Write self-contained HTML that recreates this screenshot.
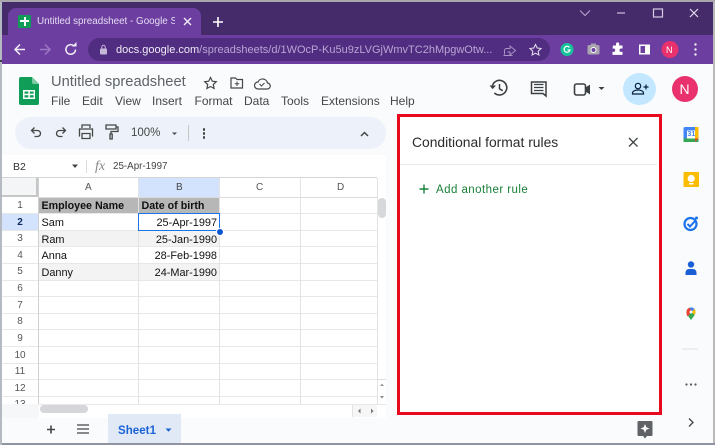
<!DOCTYPE html>
<html><head><meta charset="utf-8">
<style>
html,body{margin:0;padding:0;}
body{width:715px;height:445px;position:relative;overflow:hidden;background:#f9fbfd;font-family:"Liberation Sans",sans-serif;}
.a{position:absolute;}
.t{position:absolute;white-space:nowrap;}
svg{position:absolute;overflow:visible;}
.menu{position:absolute;top:94px;font-size:12px;color:#444746;line-height:14px;}
.rh{position:absolute;left:2px;width:36px;text-align:center;font-size:10px;color:#555;line-height:16px;}
.c{position:absolute;font-size:10.9px;color:#111;line-height:16px;white-space:nowrap;}
.hl{position:absolute;left:2px;width:375px;height:1px;background:#e8e8e8;}
.vl{position:absolute;width:1px;background:#e3e3e3;top:178px;height:226px;}
</style></head><body>
<!-- window chrome -->
<div class="a" style="left:0;top:0;width:715px;height:2px;background:#a9a7ab"></div>
<div class="a" style="left:2px;top:2px;width:711px;height:33px;background:#452b69"></div>
<div class="a" style="left:2px;top:35px;width:711px;height:29px;background:#6c3ea0"></div>
<div class="a" style="left:8px;top:8px;width:193px;height:28px;background:#6c3ea0;border-radius:8px 8px 0 0"></div>
<div class="a" style="left:18px;top:15px;width:13px;height:13px;background:#0f9d58;border-radius:1px"></div>
<div class="a" style="left:20px;top:20px;width:9px;height:2px;background:#fff"></div>
<div class="a" style="left:23.5px;top:17px;width:2px;height:9px;background:#fff"></div>
<div class="t" style="left:37px;top:15px;font-size:9.850px;line-height:14px;color:#e5dcf2;width:138px;overflow:hidden;">Untitled spreadsheet - Google Sheets</div>
<svg style="left:0;top:0" width="715" height="64" fill="none">
<path d="M184 18l7 7M191 18l-7 7" stroke="#f1ecf7" stroke-width="1.4"/>
<path d="M213 22h10M218 17v10" stroke="#fff" stroke-width="1.6"/>
<path d="M580 10.5l5 5 5-5" stroke="#b9a8cf" stroke-width="1"/>
<path d="M617 13h8" stroke="#cfc3df" stroke-width="1.2"/>
<rect x="653.5" y="9" width="9" height="8" stroke="#d5cbe3" stroke-width="1.2"/>
<path d="M690 9l8 8M698 9l-8 8" stroke="#e4ddee" stroke-width="1.2"/>
<path d="M25 49.5H15M20 44.5l-5 5 5 5" stroke="#f2eef8" stroke-width="1.5"/>
<path d="M40 49.5h10M45 44.5l5 5-5 5" stroke="#9a78c4" stroke-width="1.5"/>
<path d="M75.5 49.5a4.8 4.8 0 1 1-1.6-3.6" stroke="#f2eef8" stroke-width="1.5"/>
<path d="M72 46.5h4.500v-4.500z" fill="#f2eef8"/>
</svg>
<!-- address bar -->
<div class="a" style="left:88px;top:38px;width:462px;height:23px;background:#502d80;border-radius:12px"></div>
<svg style="left:99px;top:44px" width="10" height="11"><rect x="1" y="4.500" width="7" height="6" rx="1" fill="#c4b7d7"/><path d="M2.800 5V3a1.700 1.700 0 0 1 3.400 0v2" stroke="#c4b7d7" fill="none"/></svg>
<div class="t" style="left:116px;top:42px;font-size:11px;line-height:16px;color:#b9a5d5"><span style="color:#f0ebf6">docs.google.com</span>/spreadsheets/d/1WOcP-Ku5u9zLVGjWmvTC2hMpgwOtw...</div>
<svg style="left:0;top:0" width="715" height="64" fill="none">
<path d="M504.500 54.500v-4a2 2 0 0 1 2-2h3.500v-2.500l5.500 4.500-5.500 4.500v-3h-2.500M503.500 55.500h9" stroke="#a892c6" stroke-width="1"/>
<path d="M535.500 44.500l1.700 3.500 3.800.5-2.800 2.700.7 3.800-3.400-1.800-3.400 1.800.7-3.800-2.800-2.700 3.800-.5z" stroke="#e0d8ec" stroke-width="1.100"/>
<circle cx="567" cy="49.500" r="6.500" fill="#15c39a"/>
<path d="M569.500 47.500a3 3 0 1 0 .5 2.500h-2.500" stroke="#fff" stroke-width="1.200"/>
<rect x="587.500" y="45" width="12" height="9.500" rx="1.500" fill="#a9a4ad"/><rect x="591" y="43.500" width="5" height="2" fill="#a9a4ad"/><circle cx="593.500" cy="50" r="2.500" fill="#6c3ea0" stroke="#fff"/>
<path d="M613 46h3v-1.500a1.600 1.600 0 0 1 3.200 0V46h3.300v3h-1.300a1.700 1.700 0 0 0 0 3.400h1.300v3h-10v-3h1a1.700 1.700 0 0 0 0-3.400h-1z" fill="#fff" transform="translate(0 -.5)"/>
<rect x="639" y="44.500" width="11" height="10" fill="#fff"/><rect x="640.500" y="46" width="4.500" height="7" fill="#6c3ea0"/>
<circle cx="670" cy="49.500" r="8.500" fill="#e8316d"/>
<circle cx="695.500" cy="44.500" r="1.200" fill="#eee"/><circle cx="695.500" cy="49.500" r="1.200" fill="#eee"/><circle cx="695.500" cy="54.500" r="1.200" fill="#eee"/>
</svg>
<div class="t" style="left:666px;top:44px;font-size:9px;line-height:12px;color:#fff">N</div>
<!-- Sheets logo -->
<svg style="left:19px;top:77px" width="21" height="28"><path d="M2 0h11l7 7v19a2 2 0 0 1-2 2H2a2 2 0 0 1-2-2V2a2 2 0 0 1 2-2z" fill="#0f9d58"/><path d="M13 0v5.500a1.500 1.500 0 0 0 1.500 1.500H20z" fill="#7bcba3"/><rect x="4" y="13" width="12" height="9" fill="#fff"/><rect x="5.500" y="14.500" width="3.800" height="2.200" fill="#0f9d58"/><rect x="10.800" y="14.500" width="3.800" height="2.200" fill="#0f9d58"/><rect x="5.500" y="18.200" width="3.800" height="2.300" fill="#0f9d58"/><rect x="10.800" y="18.200" width="3.800" height="2.300" fill="#0f9d58"/></svg>
<div class="t" style="left:51px;top:73px;font-size:14.700px;line-height:18px;color:#5f6368">Untitled spreadsheet</div>
<svg style="left:0;top:0" width="715" height="120" fill="none">
<path d="M210.500 77.500l1.800 3.700 4 .5-3 2.800.8 4-3.600-2-3.600 2 .8-4-3-2.800 4-.5z" stroke="#444746" stroke-width="1.200"/>
<path d="M231 78h4.500l1.500 1.500h5.500v8.500H231z" stroke="#444746" stroke-width="1.200"/><path d="M237 81.500v4.500M234.800 83.700h4.500" stroke="#444746" stroke-width="1"/>
<path d="M258 89h9a3 3 0 0 0 .5-6 5 5 0 0 0-9.500-1 3.500 3.500 0 0 0 0 7z" stroke="#444746" stroke-width="1.200"/><path d="M259.500 84l2 2 3-3" stroke="#444746"/>
<!-- right header icons -->
<path d="M492.500 85.500a7.300 7.300 0 1 1 1.900 7.400" stroke="#3c4043" stroke-width="1.600"/>
<path d="M490 85.500l2.700 3 2.800-3" fill="#3c4043" stroke="#3c4043" stroke-width=".8"/>
<path d="M499.500 84v4.800l3.200 1.900" stroke="#3c4043" stroke-width="1.500"/>
<path d="M531.500 82h14.500v14l-3-2.500h-11.500z" stroke="#3c4043" stroke-width="1.500"/><path d="M534 85h9.500M534 88h9.500M534 91h9.500" stroke="#3c4043" stroke-width="1.200" transform="translate(0 -.5)"/>
<rect x="574.500" y="84" width="11" height="11" rx="2" stroke="#3c4043" stroke-width="1.600"/><path d="M585.500 88l4-2.500v8l-4-2.500z" fill="#3c4043" stroke="#3c4043"/>
<path d="M598.500 87h6l-3 3z" fill="#3c4043"/>
</svg>
<div class="a" style="left:623px;top:73px;width:33px;height:32px;background:#c2e7ff;border-radius:50%"></div>
<svg style="left:631px;top:81px" width="18" height="16" fill="none"><circle cx="7" cy="5" r="2.700" stroke="#0b1f3a" stroke-width="1.200"/><path d="M1.500 13v-1c0-2 3-3 5.500-3s5.500 1 5.500 3v1z" stroke="#0b1f3a" stroke-width="1.200"/><path d="M12.500 6h5M15 3.500v5" stroke="#0b1f3a" stroke-width="1.200"/></svg>
<div class="a" style="left:671.500px;top:76px;width:26px;height:26px;background:#e8316d;border-radius:50%;color:#fff;font-size:14px;line-height:26px;text-align:center">N</div>
<!-- menu -->
<div class="menu" style="left:51px">File</div>
<div class="menu" style="left:82px">Edit</div>
<div class="menu" style="left:115px">View</div>
<div class="menu" style="left:152px">Insert</div>
<div class="menu" style="left:194.500px">Format</div>
<div class="menu" style="left:244px">Data</div>
<div class="menu" style="left:281px">Tools</div>
<div class="menu" style="left:321px">Extensions</div>
<div class="menu" style="left:390px">Help</div>
<!-- toolbar -->
<div class="a" style="left:15px;top:117px;width:371px;height:32px;background:#edf2fa;border-radius:16px"></div>
<svg style="left:0;top:110px" width="400" height="40" fill="none" stroke="#444746" stroke-width="1.300">
<path d="M32 21.500h5.500a3 3 0 0 1 0 6h-3M34.500 18.500l-3 3 3 3" transform="translate(0 -1)"/>
<path d="M65 21.500h-5.500a3 3 0 0 0 0 6h3M62.500 18.500l3 3-3 3" transform="translate(0 -1)"/>
<path d="M82 18v-3h8v3M80 26h-.5v-7h13v7H92M82 23.500h8v5h-8z"/>
<path d="M106 15h10v4h-10zM116 17h2v4.500h-7v2.500M110 24h2.200v5H110z"/>
<path d="M172 22.500h5l-2.500 2.500z" fill="#444746" stroke="none"/>
<path d="M361 26l3.500-3.500 3.500 3.500" stroke-width="1.500"/>
</svg>
<div class="t" style="left:131px;top:126px;font-size:11.500px;line-height:14px;color:#444746">100%</div>
<div class="a" style="left:188px;top:125px;width:1px;height:16px;background:#c7c7c7"></div>
<div class="a" style="left:202.500px;top:128px;width:2.500px;height:2.500px;background:#444;border-radius:50%;box-shadow:0 4px 0 #444,0 8px 0 #444"></div>
<!-- formula bar -->
<div class="a" style="left:2px;top:155px;width:384px;height:22px;background:#fff"></div>
<div class="t" style="left:13px;top:160px;font-size:10.500px;line-height:14px;color:#333">B2</div>
<svg style="left:71px;top:164px" width="8" height="5"><path d="M1 .5h6l-3 3.500z" fill="#444"/></svg>
<div class="a" style="left:86px;top:160px;width:1px;height:13px;background:#ddd"></div>
<div class="t" style="left:95px;top:159px;font-family:'Liberation Serif',serif;font-style:italic;font-size:14px;line-height:15px;color:#888">fx</div>
<div class="t" style="left:113px;top:160px;font-size:9.800px;line-height:14px;color:#444">25-Apr-1997</div>
<!-- grid -->
<div class="a" style="left:2px;top:177px;width:384px;height:227px;background:#fff"></div>
<div class="a" style="left:2px;top:177px;width:375px;height:1px;background:#d5d5d5"></div>
<div class="a" style="left:139px;top:178px;width:81px;height:19px;background:#d3e3fd"></div>
<div class="a" style="left:2px;top:213px;width:36px;height:17px;background:#d3e3fd"></div>
<div class="a" style="left:39px;top:197px;width:181px;height:16px;background:#b7b7b7"></div>
<div class="a" style="left:39px;top:230px;width:181px;height:16.500px;background:#f3f3f3"></div>
<div class="a" style="left:39px;top:263px;width:181px;height:17px;background:#f3f3f3"></div>
<div class="a" style="left:38px;top:197px;width:339px;height:1px;background:#dcdcdc"></div>
<div class="hl" style="top:213px"></div><div class="hl" style="top:230px"></div><div class="hl" style="top:246px"></div><div class="hl" style="top:263px"></div><div class="hl" style="top:280px"></div><div class="hl" style="top:296px"></div><div class="hl" style="top:313px"></div><div class="hl" style="top:329px"></div><div class="hl" style="top:346px"></div><div class="hl" style="top:363px"></div><div class="hl" style="top:379px"></div><div class="hl" style="top:396px"></div>
<div class="vl" style="left:38px;background:#d0d0d0"></div><div class="vl" style="left:138px"></div><div class="vl" style="left:219px"></div><div class="vl" style="left:300px"></div><div class="vl" style="left:377px"></div>
<div class="a" style="left:2px;top:178px;width:36px;height:19px;background:#f4f5f6;border-right:2px solid #c4c7c5;border-bottom:2px solid #c4c7c5;box-sizing:border-box"></div>
<div class="t" style="left:85px;top:180.500px;font-size:10px;line-height:14px;color:#555">A</div>
<div class="t" style="left:176px;top:180.500px;font-size:10px;line-height:14px;color:#444">B</div>
<div class="t" style="left:256px;top:180.500px;font-size:10px;line-height:14px;color:#555">C</div>
<div class="t" style="left:337px;top:180.500px;font-size:10px;line-height:14px;color:#555">D</div>
<div class="rh" style="top:198px">1</div><div class="rh" style="top:215px;font-weight:bold;color:#0b2a5c">2</div><div class="rh" style="top:231px">3</div><div class="rh" style="top:248px">4</div><div class="rh" style="top:264px">5</div><div class="rh" style="top:281px">6</div><div class="rh" style="top:298px">7</div><div class="rh" style="top:314px">8</div><div class="rh" style="top:331px">9</div><div class="rh" style="top:348px">10</div><div class="rh" style="top:364px">11</div><div class="rh" style="top:381px">12</div><div class="rh" style="top:397px;height:7px;overflow:hidden">13</div>
<div class="c" style="left:41.500px;top:198px;font-weight:bold;font-size:10.700px">Employee Name</div>
<div class="c" style="left:141.500px;top:198px;font-weight:bold;font-size:10.700px">Date of birth</div>
<div class="c" style="left:41.500px;top:215px">Sam</div>
<div class="c" style="left:41.500px;top:231.500px">Ram</div>
<div class="c" style="left:41.500px;top:248px">Anna</div>
<div class="c" style="left:41.500px;top:265px">Danny</div>
<div class="c" style="right:498px;top:215px">25-Apr-1997</div>
<div class="c" style="right:498px;top:231.500px">25-Jan-1990</div>
<div class="c" style="right:498px;top:248px">28-Feb-1998</div>
<div class="c" style="right:498px;top:265px">24-Mar-1990</div>
<div class="a" style="left:138px;top:213px;width:82px;height:18px;border:1.500px solid #1a73e8;box-sizing:border-box"></div>
<div class="a" style="left:216px;top:227.500px;width:6px;height:6px;background:#0b57d0;border-radius:50%;border:.5px solid #fff"></div>
<!-- scrollbars -->
<div class="a" style="left:378px;top:198px;width:8px;height:20px;background:#d6d8db;border-radius:4px"></div>
<div class="a" style="left:377px;top:379px;width:9px;height:1px;background:#ddd"></div>
<svg style="left:378px;top:382px" width="8" height="22"><path d="M2 4h4L4 1.500z" fill="#999"/><path d="M2 14h4l-2 2.500z" fill="#888"/></svg>
<div class="a" style="left:2px;top:404px;width:384px;height:14px;background:#fff;border-top:1px solid #e8e8e8;box-sizing:border-box"></div>
<div class="a" style="left:2px;top:404px;width:37px;height:14px;background:#f6f7f8"></div>
<div class="a" style="left:40px;top:405px;width:48px;height:8px;background:#d4d6da;border-radius:4px"></div>
<div class="a" style="left:352px;top:405px;width:25px;height:12px;background:#f6f6f6;border-left:1px solid #e4e4e4;box-sizing:border-box"></div>
<svg style="left:352px;top:405px" width="26" height="12"><path d="M8.500 3.500v5l-2.500-2.500zM19 3.500v5l2.500-2.500z" fill="#777"/></svg>
<!-- sheet tabs -->
<div class="a" style="left:2px;top:418px;width:711px;height:25px;background:#f9fbfd"></div>
<svg style="left:0;top:418px" width="100" height="24" fill="none" stroke="#444746"><path d="M47 11.500h8M51 7.500v8" stroke-width="1.600"/><path d="M77 7h12M77 11h12M77 15h12" stroke-width="1.300"/></svg>
<div class="a" style="left:108px;top:414px;width:73px;height:29px;background:#e1e9f7"></div>
<div class="t" style="left:118px;top:424px;font-size:11.500px;line-height:15px;letter-spacing:.05px;font-weight:bold;color:#1a62d6">Sheet1</div>
<svg style="left:165px;top:428px" width="8" height="5"><path d="M.5 .5h6L3.500 3.800z" fill="#1a62d6"/></svg>
<!-- red panel -->
<div class="a" style="left:397px;top:114px;width:265px;height:301px;background:#fff;border:3px solid #e8091e;box-sizing:border-box"></div>
<div class="a" style="left:400px;top:164px;width:257px;height:1px;background:#eaeaea"></div>
<div class="t" style="left:412px;top:134px;font-size:13.850px;line-height:16px;color:#2a2b2d">Conditional format rules</div>
<svg style="left:627px;top:136px" width="12" height="12" fill="none"><path d="M2 2l8.500 8.500M10.500 2L2 10.500" stroke="#3c4043" stroke-width="1.300"/></svg>
<svg style="left:417.500px;top:183px" width="12" height="12" fill="none"><path d="M1.500 6h9M6 1.500v9" stroke="#188038" stroke-width="1.400"/></svg>
<div class="t" style="left:436px;top:183px;font-size:11.500px;line-height:15px;letter-spacing:.45px;color:#188038">Add another rule</div>
<!-- side panel -->
<svg style="left:680px;top:120px" width="24" height="310" fill="none">
<rect x="3.500" y="7" width="15" height="15" rx="1.500" fill="#4285f4"/>
<rect x="7" y="10.500" width="8" height="8" fill="#fff"/>
<rect x="3.500" y="18.500" width="15" height="3.500" fill="#34a853"/>
<rect x="15" y="7" width="3.500" height="11.500" fill="#fbbc04"/>
<path d="M15 22l3.500-3.500H15z" fill="#ea4335"/>
<rect x="3.500" y="52" width="15.500" height="15" rx="1" fill="#fbbc04"/>
<circle cx="11.200" cy="58.500" r="3.600" fill="#fff"/><rect x="9" y="63" width="4.500" height="1.500" fill="#fff"/>
<circle cx="10.500" cy="104" r="6" stroke="#1a73e8" stroke-width="2.200"/>
<path d="M7.500 104l2.500 2.500 5.500-6" stroke="#1a73e8" stroke-width="2"/>
<circle cx="16.500" cy="98" r="1.500" fill="#1a73e8"/>
<circle cx="11" cy="144.500" r="3.200" fill="#1a5fd6"/>
<path d="M5.500 155v-2.500a3.500 3.500 0 0 1 3.500-3.500h4a3.500 3.500 0 0 1 3.500 3.500V155z" fill="#1a5fd6"/>
<path d="M11 200c-3-4-4.500-6-4.500-8a4.500 4.500 0 0 1 9 0c0 2-1.500 4-4.500 8z" fill="#34a853"/>
<path d="M6.500 192a4.500 4.500 0 0 1 3-4.300l3 3.500-5 5.300a7 7 0 0 1-1-4.500z" fill="#ea4335"/>
<path d="M9.500 187.700a4.500 4.500 0 0 1 5 1.300l-2.500 2.800z" fill="#4285f4"/>
<path d="M14.500 189a4.500 4.500 0 0 1 1 3c0 1-.5 2-1 3l-3-3z" fill="#fbbc04"/>
<circle cx="11" cy="192" r="1.500" fill="#fff"/>
<path d="M2 229h16" stroke="#e0e0e0"/>
<circle cx="6.500" cy="264.500" r="1.100" fill="#555"/><circle cx="11" cy="264.500" r="1.100" fill="#555"/><circle cx="15.500" cy="264.500" r="1.100" fill="#555"/>
<path d="M9 298.500l4 4-4 4" stroke="#444" stroke-width="1.300"/>
</svg>
<div class="t" style="left:687.500px;top:130px;font-size:7px;line-height:9px;font-weight:bold;color:#4285f4">31</div>
<svg style="left:637px;top:421px" width="16" height="18"><path d="M1.500 0h13a1 1 0 0 1 1 1v13a1 1 0 0 1-1 1H10l-2 2.500L6 15H1.500a1 1 0 0 1-1-1V1a1 1 0 0 1 1-1z" fill="#5f6368"/><path d="M8 3l1.300 3.200L12.500 7.500 9.300 8.800 8 12 6.700 8.800 3.500 7.500l3.200-1.300z" fill="#fff"/></svg>
<!-- window edges -->
<div class="a" style="left:0;top:2px;width:2px;height:443px;background:#b5bac2"></div>
<div class="a" style="left:0;top:60px;width:2px;height:2px;background:#444"></div>
<div class="a" style="left:713px;top:2px;width:2px;height:443px;background:#b9b9b9"></div>
<div class="a" style="left:2px;top:443px;width:713px;height:2px;background:#8f94a0"></div>
</body></html>
